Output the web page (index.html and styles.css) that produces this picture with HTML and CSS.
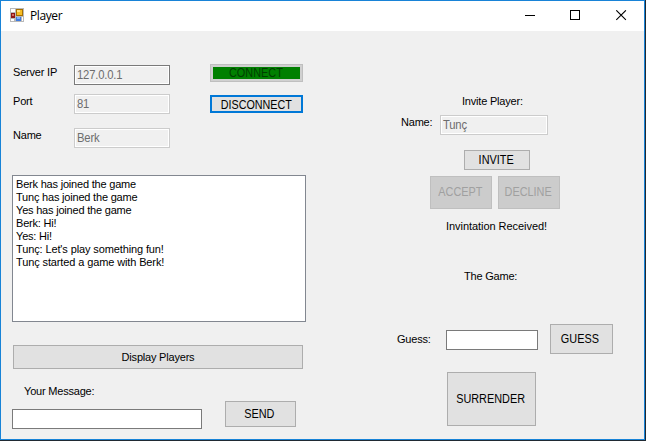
FILE: index.html
```html
<!DOCTYPE html>
<html lang="en">
<head>
<meta charset="utf-8">
<title>Player</title>
<link rel="stylesheet" href="styles.css">
</head>
<body>
<div class="window">
  <header class="titlebar">
    <svg class="app-icon" width="14" height="14" viewBox="0 0 14 14" shape-rendering="crispEdges">
      <rect width="14" height="14" fill="#b9b9b9"/>
      <path d="M1 1h4v3H1zM1 11h3v2H1zM12 9h1v4h-1z" fill="#fff"/>
      <rect x="6" y="1" width="7" height="7" fill="#a66f00"/>
      <rect x="7" y="2" width="5" height="5" fill="#f6bd25"/>
      <rect x="7" y="2" width="3" height="2" fill="#ffe080"/>
      <rect x="1" y="5" width="4" height="5" fill="#8e1717"/>
      <rect x="2" y="6" width="2" height="2" fill="#d76a60"/>
      <rect x="6" y="9" width="5" height="4" fill="#3f7be0"/>
      <rect x="7" y="9" width="3" height="2" fill="#82b2f8"/>
    </svg>
    <span class="title">Player</span>
    <svg class="controls" width="104" height="12" viewBox="0 0 104 12">
      <path d="M0 5.5h10" stroke="#000"/>
      <rect x="45.5" y=".5" width="9" height="9" fill="none" stroke="#000"/>
      <path d="M91.3.3l9.6 9.6M100.9.3l-9.6 9.6" stroke="#000" stroke-width="1.1"/>
    </svg>
  </header>
  <main class="client">
    <section class="left">
      <div class="connection">
        <div class="fields">
          <div class="row"><label>Server IP</label><div class="input disabled hover"><span>127.0.0.1</span></div></div>
          <div class="row port"><label>Port</label><div class="input disabled"><span>81</span></div></div>
          <div class="row name"><label>Name</label><div class="input disabled"><span>Berk</span></div></div>
        </div>
        <div class="actions">
          <div class="button connect"><span>CONNECT</span></div>
          <div class="button disconnect"><span>DISCONNECT</span></div>
        </div>
      </div>
      <div class="log">
        <p>Berk has joined the game</p>
        <p>Tunç has joined the game</p>
        <p>Yes has joined the game</p>
        <p>Berk: Hi!</p>
        <p>Yes: Hi!</p>
        <p class="loose">Tunç: Let's play something fun!</p>
        <p class="loose">Tunç started a game with Berk!</p>
      </div>
      <div class="button display">Display Players</div>
      <div class="composer">
        <div class="message"><label>Your Message:</label><div class="input"></div></div>
        <div class="button send"><span>SEND</span></div>
      </div>
    </section>
    <section class="right">
      <label class="invite-title">Invite Player:</label>
      <div class="invite-row"><label>Name:</label><div class="input disabled"><span>Tunç</span></div></div>
      <div class="button invite"><span>INVITE</span></div>
      <div class="answers">
        <div class="button off"><span>ACCEPT</span></div>
        <div class="button off"><span>DECLINE</span></div>
      </div>
      <label class="received">Invintation Received!</label>
      <label class="game">The Game:</label>
      <div class="guess-row"><label>Guess:</label><div class="input"></div><div class="button guess"><span>GUESS</span></div></div>
      <div class="button surrender"><span>SURRENDER</span></div>
    </section>
  </main>
</div>
</body>
</html>
```

FILE: styles.css
```css
* { box-sizing: border-box; }
body {
  margin: 0;
  width: 646px;
  height: 441px;
  overflow: hidden;
  background: #202a33;
  font: 11px/13px "Liberation Sans", Arial, sans-serif;
  letter-spacing: -.2px;
  color: #000;
  white-space: nowrap;
}
.window {
  width: 645px;
  height: 440px;
  border: 1px solid #1883d7;
  background: #f0f0f0;
}
.titlebar {
  display: flex;
  height: 30px;
  padding: 7px 0 0 9px;
  background: #fff;
}
.title {
  width: 40px;
  margin-left: 6px;
  font: 12px/16px "Open Sans", sans-serif;
  letter-spacing: -.4px;
}
.controls { margin: 2px 0 0 455px; }
.client { display: flex; }
label { display: block; height: 13px; }
.left { width: 390px; padding: 33px 0 0 11px; }
.right { padding-top: 64px; }
.connection { display: flex; height: 111px; padding-left: 1px; }
.fields { width: 197px; padding-top: 1px; }
.row { display: flex; height: 20px; }
.row label { width: 61px; padding-top: 1px; }
.row .input { width: 96px; }
.row.port { margin-top: 9px; }
.row.name { margin-top: 14px; }
.input {
  height: 20px;
  border: 1px solid #7a7a7a;
  background: #fff;
}
.input.disabled {
  padding: 3px 0 0 2px;
  border-color: #ccc;
  background: #f0f0f0;
  box-shadow: inset 0 0 0 1px #fff;
  color: #6d6d6d;
  font-size: 12.5px;
}
.input.hover { border-color: #7a7a7a; }
.input span {
  display: inline-block;
  transform: scaleX(.9);
  transform-origin: left;
}
.button {
  display: flex;
  align-items: center;
  justify-content: center;
  border: 1px solid #adadad;
  background: #e1e1e1;
}
.button span {
  font-size: 12.5px;
  letter-spacing: 0;
  transform: translateX(-1px) scaleX(.87);
}
.actions .button { width: 93px; height: 18px; }
.button.connect {
  border-color: #bfbfbf;
  background: #008000;
  box-shadow: inset 0 0 0 2px #d0d0d0;
  color: #003e00;
}
.button.disconnect { margin-top: 13px; border: 2px solid #0078d7; }
.button.disconnect span { transform: translateY(1px) scaleX(.86); }
.log {
  width: 294px;
  height: 147px;
  padding: 2px 3px;
  border: 1px solid #828790;
  background: #fff;
}
.log p { margin: 0; }
.log .loose { letter-spacing: -.12px; }
.button.display { width: 290px; height: 24px; margin: 23px 0 0 1px; }
.composer { display: flex; padding-top: 16px; }
.message { width: 190px; }
.message label { margin-left: 12px; }
.message .input { margin-top: 11px; }
.button.send { width: 71px; height: 26px; margin: 16px 0 0 23px; }
.invite-title { margin-left: 71px; }
.invite-row { display: flex; margin: 7px 0 0 10px; }
.invite-row label { width: 39px; padding-top: 1px; }
.invite-row .input { width: 108px; }
.button.invite { width: 66px; height: 20px; margin: 15px 0 0 73px; }
.answers { display: flex; gap: 6px; margin: 6px 0 0 39px; }
.button.off {
  width: 62px;
  height: 33px;
  border-color: #bfbfbf;
  background: #ccc;
  color: #a0a0a0;
}
.received { margin: 11px 0 0 55px; letter-spacing: -.05px; }
.game { margin: 37px 0 0 73px; }
.guess-row { display: flex; margin: 41px 0 0 6px; }
.guess-row label { width: 49px; padding-top: 9px; }
.guess-row .input { width: 92px; margin-top: 6px; }
.button.guess { width: 63px; height: 30px; margin-left: 12px; }
.button.guess span { transform: translateX(-2px) scaleX(.87); }
.button.surrender { width: 89px; height: 54px; margin: 18px 0 0 56px; }
```
